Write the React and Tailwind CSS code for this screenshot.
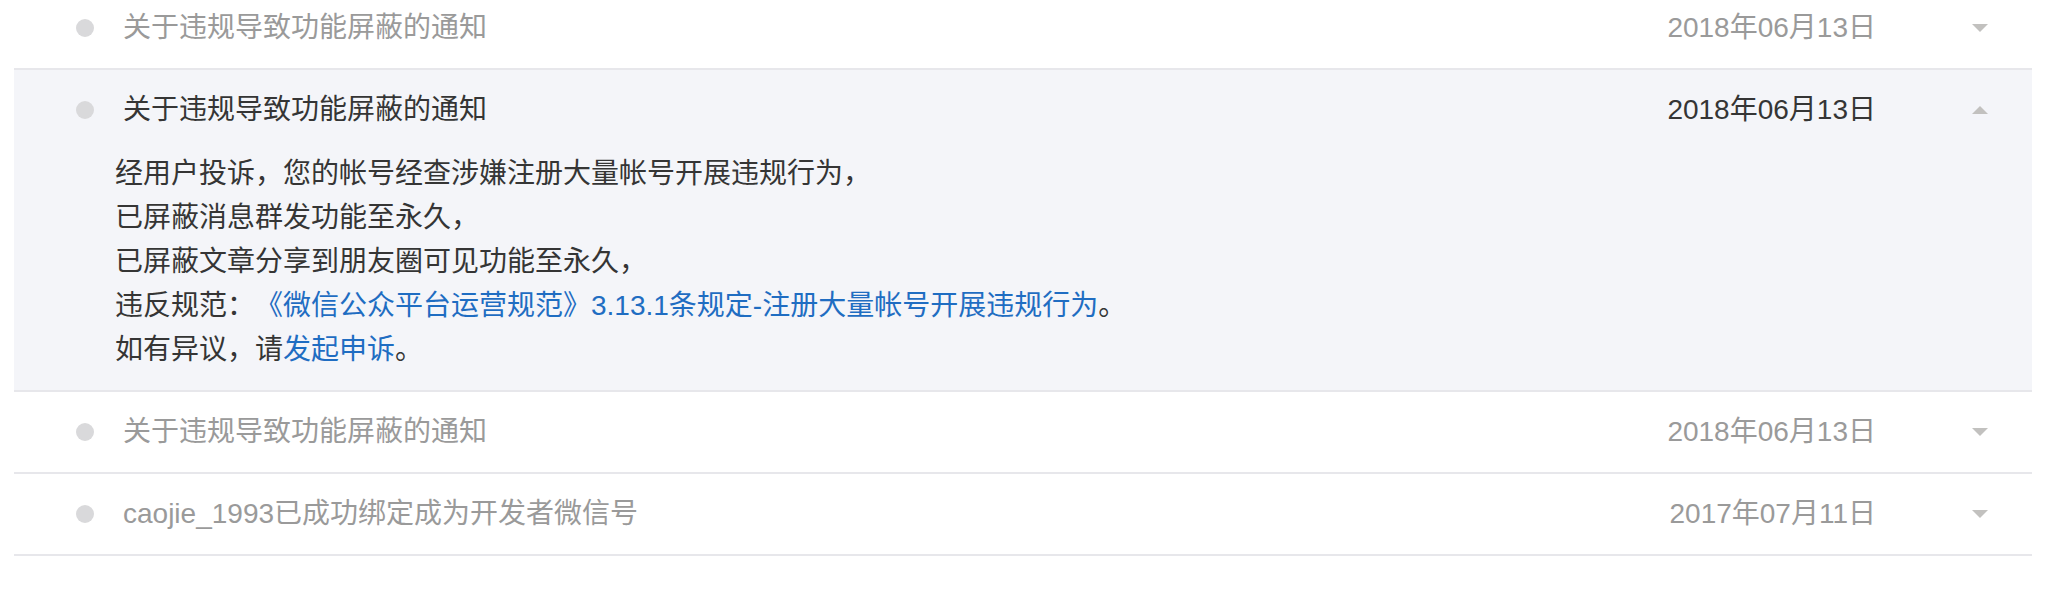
import { useState } from "react";

const notices = [
  { id: 1, title: "关于违规导致功能屏蔽的通知", date: "2018年06月13日" },
  { id: 2, title: "关于违规导致功能屏蔽的通知", date: "2018年06月13日" },
  { id: 3, title: "关于违规导致功能屏蔽的通知", date: "2018年06月13日" },
  { id: 4, title: "caojie_1993已成功绑定成为开发者微信号", date: "2017年07月11日" },
];

const Arrow = ({ up }) => (
  <svg width="16" height="8" viewBox="0 0 16 8" className="block">
    {up ? (
      <polygon points="0,8 16,8 8,0" fill="#c2c1bf" />
    ) : (
      <polygon points="0,0 16,0 8,8" fill="#c2c1bf" />
    )}
  </svg>
);

const NoticeRow = ({ item, open, onToggle }) => {
  return (
    <div className={`border-b-2 border-[#e7e7eb] ${open ? "bg-[#f4f5f9]" : ""}`}>
      <div
        className="flex items-center h-[80px] pl-[62px] cursor-pointer"
        onClick={onToggle}
      >
        <span className="w-[18px] h-[18px] rounded-full bg-[#d9d9db] shrink-0"></span>
        <span
          className={`ml-[29px] flex-1 text-[28px] leading-[40px] ${
            open ? "text-[#353535]" : "text-[#9a9a9a]"
          }`}
        >
          {item.title}
        </span>
        <span
          className={`text-[28px] leading-[40px] ${
            open ? "text-[#353535]" : "text-[#9a9a9a]"
          }`}
        >
          {item.date}
        </span>
        <span className="ml-[96px] mr-[44px]">
          <Arrow up={open} />
        </span>
      </div>
      {open && (
        <div className="pl-[101px] pt-[2px] pb-[18px] text-[28px] leading-[44px] text-[#353535] [text-spacing-trim:space-all]">
          <p>经用户投诉，您的帐号经查涉嫌注册大量帐号开展违规行为，</p>
          <p>已屏蔽消息群发功能至永久，</p>
          <p>已屏蔽文章分享到朋友圈可见功能至永久，</p>
          <p>
            违反规范：
            <a className="text-[#1f6dc2]" href="#">
              《微信公众平台运营规范》3.13.1条规定-注册大量帐号开展违规行为
            </a>
            。
          </p>
          <p>
            如有异议，请
            <a className="text-[#1f6dc2]" href="#">
              发起申诉
            </a>
            。
          </p>
        </div>
      )}
    </div>
  );
};

export default function App() {
  const [openId, setOpenId] = useState(2);

  return (
    <div
      className="w-[2072px] h-[602px] bg-white overflow-hidden"
      style={{ fontFamily: '"Liberation Sans", "Noto Sans CJK SC", sans-serif' }}
    >
      <div className="mx-[14px] w-[2018px] -mt-[12px]">
        {notices.map((item) => (
          <NoticeRow
            key={item.id}
            item={item}
            open={openId === item.id}
            onToggle={() => setOpenId(openId === item.id ? null : item.id)}
          />
        ))}
      </div>
    </div>
  );
}
